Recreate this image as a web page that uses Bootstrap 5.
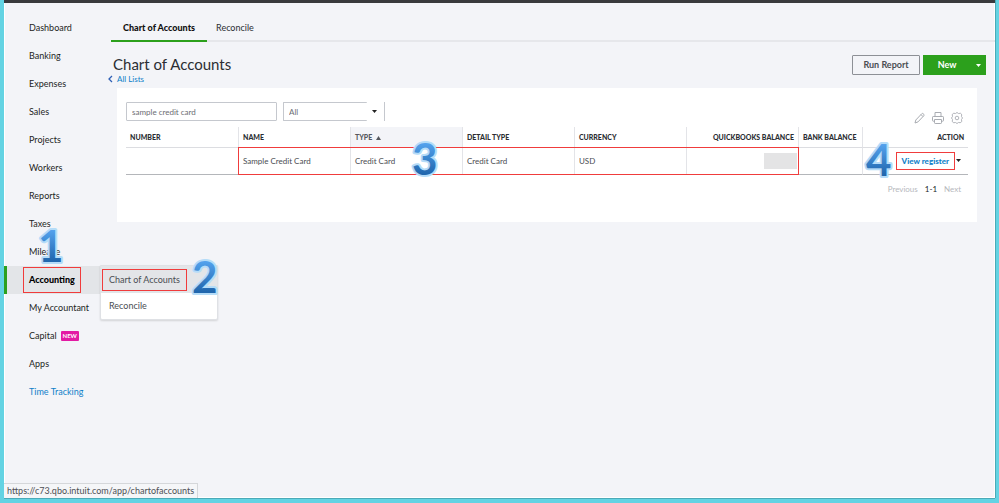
<!DOCTYPE html>
<html lang="en">
<head>
<meta charset="utf-8">
<meta name="viewport" content="width=device-width, initial-scale=1">
<title>Chart of Accounts</title>
<link href="https://cdn.jsdelivr.net/npm/bootstrap@5.3.0/dist/css/bootstrap.min.css" rel="stylesheet">
<style>
:root{--ink:#2b2e33;--green:#2ca01c;--mark:#f03c3c;--link:#0f7fc9}
body{background:#63d3e3;font-family:Lato,"Open Sans",sans-serif;font-size:9px;line-height:14px;color:var(--ink)}
a{text-decoration:none}
.app-frame{padding:0 4px 5px;min-height:100vh}
.app-window{background:#f3f4f8;border-top:3px solid #393a3d;box-shadow:inset 1px 0 #fff,inset -1px -1px #fff,0 1px #4baab8,1px 0 #4baab8}
.side-nav{width:107px;padding-top:11px}
.side-link{height:28px;padding-left:25px;color:#1d1f23;white-space:nowrap}
.side-link.current{background:#e3e5e8;border-left:3px solid var(--green);padding-left:22px;font-weight:900;color:#000}
.side-link.extra{color:var(--link)}
.side-mark{outline-offset:5px}
.tag-new{background:#e31aa4;font-size:6px;line-height:8px;padding:1px 2px;border-radius:1px;color:#fff;font-weight:700}
.marked{outline:1px solid var(--mark)}
.fly-menu{left:96px;top:-1px;width:118px;background:#fff;border:1px solid #dfe1e5;border-radius:0 0 2px 2px;box-shadow:0 1px 2px #0002;z-index:3}
.fly-menu a{height:26px;padding-left:8px;color:#4a4d52}
.fly-menu li:first-child a{background:#e3e5e8;height:27px;padding-left:4px}
.fly-menu .marked{outline-offset:2px;padding:1px 4px}
.step{width:44px;height:64px;overflow:visible;pointer-events:none;z-index:5}
.step text{font:700 44px Lato,sans-serif;fill:url(#blue);stroke:#b5dcf8;stroke-width:4px;stroke-linejoin:round;paint-order:stroke}
.step-1{left:28px;top:-52px}
.step-2{left:182px;top:-21px}
.step-3{left:55px;top:-21px}
.step-4{left:-3px;top:-20px}
.top-tabs{border-bottom:2px solid #e6e7eb;padding-top:12px}
.top-tabs a{color:var(--ink);padding:6px 9px 8px;margin-bottom:-2px;height:27px}
.top-tabs a.active{padding-left:12px;padding-right:12px;border-bottom:2px solid var(--green);font-weight:900;color:#111}
.title-block{padding-top:12px}
.page-title{font-size:15px;line-height:20px;font-weight:400;margin:0 0 0 2px}
.back-link{color:var(--link);font-size:8px;line-height:10px;gap:3px;margin-left:-3px}
.head-actions{padding:13px 9px 0 0}
.act{height:20px;font-size:9px;line-height:12px;padding:0;font-weight:700;border-radius:1px}
.act-report{width:68px;border:1px solid #8d9096;color:#4a4d52;margin-right:3px}
.act-new{width:48px;background:var(--green);color:#fff}
.act-more{width:15px;background:var(--green);color:#fff}
.sheet{background:#fff;margin:4px 18px 0 6px;padding:14px 9px 28px}
.filters{gap:6px}
.field{height:19px;border:1px solid #c5c8ce;font-size:8px;line-height:12px;padding:0 5px;border-radius:1px;background:#fff;color:#6b6c72}
.field-find{width:151px}
.pick{width:102px;border-right:1px solid #c5c8ce;height:19px}
.pick select{appearance:none;width:84px;border-right:0}
.caret{right:7px;top:8px}
.tools{gap:7px;padding:10px 5px 0 0}
.tool{border:0;background:none;padding:0;line-height:1}
.grid-table{table-layout:fixed;width:100%;font-size:8px;line-height:11px;border-collapse:separate;border-spacing:0;margin-top:3px}
.grid-table th{height:21px;padding:0 4px;font-size:7px;font-weight:900;vertical-align:middle;border-bottom:1px solid #dcdde1;white-space:nowrap}
.grid-table td{height:27px;padding:0 4px;vertical-align:middle;border-bottom:1px solid #b4b6ba;color:#4a4d52;white-space:nowrap;position:relative}
.grid-table th+th,.grid-table td+td{border-left:1px solid #e3e4e8}
.grid-table th.sorted{background:#f3f4f8;color:#55585e}
.sort-arrow{margin-left:2px}
.w-even{width:13.300%}
.w-bank{width:7.600%}
.row-mark{left:0;top:0;width:calc(500% + 4px);height:26px;pointer-events:none;z-index:2}
.hidden-sum{width:33px;height:16px;background:#e4e4e5;margin-right:-3px}
.register{color:var(--link);font-size:8px;font-weight:900}
.register.marked{outline-offset:2px;padding:1px 3px}
.reg-caret{margin:0 3px 1px 4px}
.pager{font-size:8px;line-height:10px;gap:7px;padding:9px 7px 0}
.pager a{color:#b6b8bd}
.link-tip{left:4px;bottom:5px;background:#f5f6f8;border:1px solid #d5d7da;border-left:0;border-bottom:0;color:#4d4f54;padding:0 3px}
</style>
</head>
<body>
<svg width="0" height="0" class="position-absolute" aria-hidden="true"><defs><linearGradient id="blue" x1="0" y1="0" x2="0" y2="1"><stop offset="0.2" stop-color="#55a4ef"/><stop offset="0.8" stop-color="#2167ae"/></linearGradient></defs></svg>
<div class="app-frame d-flex position-relative">
<div class="app-window d-flex flex-grow-1">
<nav class="side-nav flex-shrink-0" aria-label="Main">
<ul class="list-unstyled mb-0">
<li><a href="#" class="side-link d-flex align-items-center">Dashboard</a></li>
<li><a href="#" class="side-link d-flex align-items-center">Banking</a></li>
<li><a href="#" class="side-link d-flex align-items-center">Expenses</a></li>
<li><a href="#" class="side-link d-flex align-items-center">Sales</a></li>
<li><a href="#" class="side-link d-flex align-items-center">Projects</a></li>
<li><a href="#" class="side-link d-flex align-items-center">Workers</a></li>
<li><a href="#" class="side-link d-flex align-items-center">Reports</a></li>
<li><a href="#" class="side-link d-flex align-items-center">Taxes</a></li>
<li><a href="#" class="side-link d-flex align-items-center">Mileage</a></li>
<li class="position-relative"><a href="#" class="side-link current d-flex align-items-center"><span class="marked side-mark">Accounting</span></a>
<ul class="fly-menu list-unstyled position-absolute">
<li><a href="#" class="d-flex align-items-center"><span class="marked">Chart of Accounts</span></a></li>
<li><a href="#" class="d-flex align-items-center">Reconcile</a></li>
</ul>
<svg class="step step-1 position-absolute"><text x="6" y="48">1</text></svg>
<svg class="step step-2 position-absolute"><text x="6" y="48">2</text></svg>
</li>
<li><a href="#" class="side-link d-flex align-items-center">My Accountant</a></li>
<li><a href="#" class="side-link d-flex align-items-center">Capital <span class="tag-new ms-1">NEW</span></a></li>
<li><a href="#" class="side-link d-flex align-items-center">Apps</a></li>
<li><a href="#" class="side-link extra d-flex align-items-center">Time Tracking</a></li>
</ul>
</nav>
<main class="flex-grow-1">
<nav class="top-tabs d-flex" aria-label="Accounting"><a href="#" class="active">Chart of Accounts</a><a href="#">Reconcile</a></nav>
<header class="d-flex justify-content-between">
<div class="title-block">
<h1 class="page-title">Chart of Accounts</h1>
<a href="#" class="back-link d-flex align-items-center"><svg width="6" height="8" viewBox="0 0 6 8" fill="none" stroke="#2f5fb5" stroke-width="1.3"><path d="M4 1 1 4l3 3"/></svg>All Lists</a>
</div>
<div class="head-actions d-flex">
<button class="btn act act-report">Run Report</button>
<button class="btn act act-new rounded-0">New</button>
<button class="btn act act-more rounded-0" aria-label="More"><svg class="d-block mx-auto" width="5" height="3" viewBox="0 0 5 3"><path d="M0 0h5L2.500 3z" fill="#fff"/></svg></button>
</div>
</header>
<section class="sheet">
<div class="d-flex justify-content-between">
<div class="filters d-flex">
<input class="field field-find" aria-label="Filter by name" value="sample credit card">
<div class="pick position-relative"><select class="field" aria-label="Account type"><option>All</option></select><svg class="caret position-absolute" width="5" height="3" viewBox="0 0 5 3"><path d="M0 0h5L2.500 3z" fill="#222"/></svg></div>
</div>
<div class="tools d-flex align-items-end">
<button class="tool" aria-label="Edit"><svg class="d-block" width="12" height="12" viewBox="0 0 12 12" fill="none" stroke="#a9acb2"><path d="M2 11l.8-3 6-6.300q.6-.6 1.200-.1l.9.8q.5.600 0 1.200L5 9.900zM8 2.600l2 2"/></svg></button>
<button class="tool" aria-label="Print"><svg class="d-block" width="12" height="12" viewBox="0 0 12 12" fill="none" stroke="#a9acb2"><path d="M3 4V.5h6V4M2.500 9.200H1.200Q.5 9.200.5 8.500V5.200Q.5 4.500 1.200 4.500h9.600q.7 0 .7.700v3.300q0 .7-.7.700H9.500M2.500 7.500h7v3.300q0 .7-.7.700H3.200q-.7 0-.7-.7z"/></svg></button>
<button class="tool" aria-label="Settings"><svg class="d-block" width="12" height="12" viewBox="0 0 12 12" fill="none" stroke="#a9acb2" stroke-width=".9"><circle cx="6" cy="6" r="1.800"/><path d="M4.600 1.500Q6-.6 7.400 1.500 10.200.9 10.200 1.800 11 2.500 10.500 4.600 12.600 6 10.500 7.400 11.100 9.800 10.200 10.200 9.600 11 7.400 10.500 6 12.600 4.600 10.500 2.300 11.100 1.800 10.200.9 9.700 1.500 7.400-.6 6 1.500 4.600.9 2.300 1.800 1.800 2.300.9 4.600 1.500z"/></svg></button>
</div>
</div>
<table class="grid-table">
<colgroup><col class="w-even"><col class="w-even"><col class="w-even"><col class="w-even"><col class="w-even"><col class="w-even"><col class="w-bank"><col></colgroup>
<thead><tr><th>NUMBER</th><th>NAME</th><th class="sorted">TYPE <svg class="sort-arrow" width="5" height="4" viewBox="0 0 5 4"><path d="M0 4h5L2.500 0z" fill="#55585e"/></svg></th><th>DETAIL TYPE</th><th>CURRENCY</th><th class="text-end">QUICKBOOKS BALANCE</th><th>BANK BALANCE</th><th class="text-end">ACTION</th></tr></thead>
<tbody><tr><td></td><td>Sample Credit Card<span class="row-mark marked position-absolute"></span></td><td>Credit Card<svg class="step step-3 position-absolute"><text x="6" y="48">3</text></svg></td><td>Credit Card</td><td>USD</td><td><div class="hidden-sum ms-auto"></div></td><td></td><td class="text-end"><svg class="step step-4 position-absolute"><text x="6" y="48">4</text></svg><a href="#" class="register marked">View register</a><svg class="reg-caret" width="5" height="3" viewBox="0 0 5 3"><path d="M0 0h5L2.500 3z" fill="#222"/></svg></td></tr></tbody>
</table>
<div class="pager d-flex justify-content-end"><a href="#">Previous</a><span class="text-dark">1-1</span><a href="#">Next</a></div>
</section>
</main>
</div>
<div class="link-tip position-absolute">https://c73.qbo.intuit.com/app/chartofaccounts</div>
</div>
<script src="https://cdn.jsdelivr.net/npm/bootstrap@5.3.0/dist/js/bootstrap.bundle.min.js"></script>
</body>
</html>
